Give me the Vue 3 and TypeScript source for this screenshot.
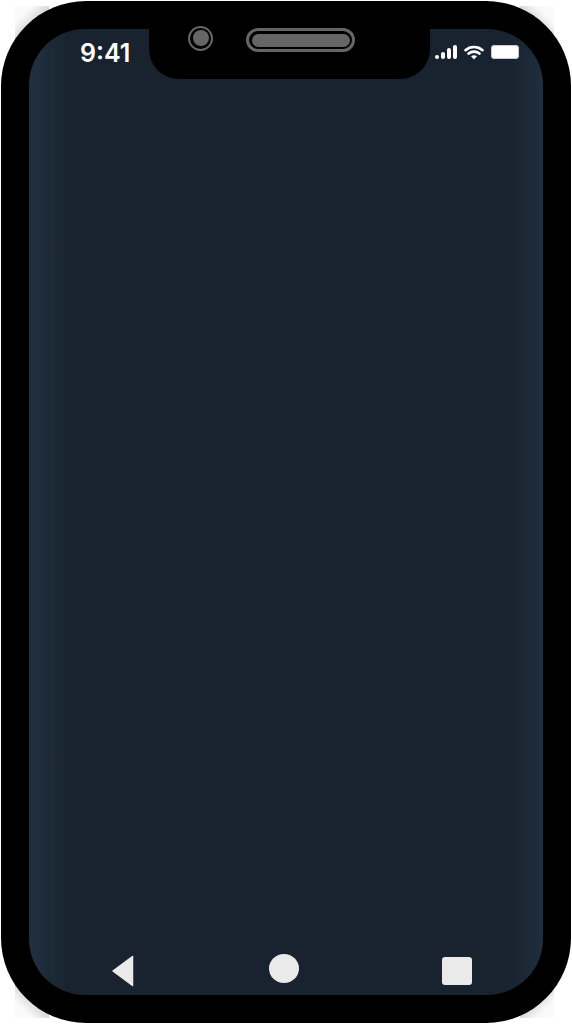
<script setup lang="ts">
const bars: number[] = [4, 7, 11, 14]
</script>

<template>
  <div class="page">
    <i class="corner tl"></i>
    <i class="corner tr"></i>
    <i class="corner bl"></i>
    <i class="corner br"></i>
    <div class="phone">
      <div class="screen">
        <div class="notch"></div>
        <div class="status">
          <span class="time">9:41</span>
          <div class="indicators">
            <div class="signal">
              <b v-for="h in bars" :key="h" class="bar" :style="{ height: h + 'px' }"></b>
            </div>
            <svg class="wifi" width="20" height="15" viewBox="0 0 20 15">
              <path d="M1.5 5.2C6.2 1 13.8 1 18.5 5.2M4.6 8.6C7.6 6 12.4 6 15.4 8.6" fill="none" stroke="#fff" stroke-width="2.6" stroke-linecap="round" />
              <path d="M7 11.3C8.8 9.9 11.2 9.9 13 11.3L10 14.6Z" fill="#fff" />
            </svg>
            <div class="battery"></div>
          </div>
        </div>
        <div class="nav">
          <svg class="back" width="22" height="32" viewBox="0 0 22 32">
            <path d="M20.5 1.5V30.5L1 16Z" fill="#eaeaea" stroke="#eaeaea" stroke-width="1.5" stroke-linejoin="round" />
          </svg>
          <div class="home"></div>
          <div class="recent"></div>
        </div>
      </div>
      <div class="earpiece">
        <div class="camera"><div class="lens"></div></div>
        <div class="speaker"><div class="grille"></div></div>
      </div>
    </div>
  </div>
</template>

<style scoped>
.page {
  position: relative;
  width: 572px;
  height: 1024px;
  background: #fff;
  overflow: hidden;
  box-sizing: border-box;
  padding: 1px;
}
.corner {
  position: absolute;
  width: 34px;
  height: 34px;
}
.tl { left: 15px; top: 6px; background: linear-gradient(135deg, #fafafa 25%, #cfcfcf 60%); }
.tr { right: 18px; top: 6px; background: linear-gradient(225deg, #fafafa 25%, #cfcfcf 60%); }
.bl { left: 15px; bottom: 6px; background: linear-gradient(45deg, #fafafa 25%, #cfcfcf 60%); }
.br { right: 18px; bottom: 6px; background: linear-gradient(315deg, #fafafa 25%, #cfcfcf 60%); }
.phone {
  position: relative;
  box-sizing: border-box;
  width: 570px;
  height: 1022px;
  padding: 28px;
  background: #000;
  border-radius: 85px;
}
.screen {
  position: relative;
  display: flex;
  flex-direction: column;
  justify-content: space-between;
  box-sizing: border-box;
  height: 966px;
  border-radius: 56px;
  overflow: hidden;
  background: linear-gradient(90deg, #1f2f3e 0, #1f2e3d 14px, #1d2b39 15px, #1c2936 26px, #1b2733 27px, #1b2632 35px, #19232f 36px, #19232f 478px, #1b2734 492px, #1d2b39 505px, #1f2f3e 514px);
}
.notch {
  position: absolute;
  left: 120px;
  top: 0;
  width: 281px;
  height: 50px;
  background: #000;
  border-radius: 0 0 30px 30px;
}
.status {
  display: flex;
  justify-content: space-between;
  align-items: center;
  padding: 10px 24px 0 51px;
}
.time {
  color: #fff;
  font: 600 25px/28px Inter, "Liberation Sans", sans-serif;
}
.indicators {
  display: flex;
  align-items: center;
  gap: 7px;
  margin-bottom: 2px;
}
.signal {
  display: flex;
  align-items: flex-end;
  gap: 2px;
}
.bar {
  display: block;
  width: 4px;
  background: #fff;
  border-radius: 2px;
}
.wifi {
  display: block;
}
.battery {
  box-sizing: border-box;
  width: 28px;
  height: 14px;
  background: #fff;
  border-radius: 4px;
  box-shadow: inset 0 0 0 1px #c9ccd0;
}
.nav {
  display: flex;
  justify-content: space-between;
  align-items: center;
  padding: 0 71px 8px 83px;
}
.back {
  display: block;
}
.home {
  width: 30px;
  height: 29px;
  border-radius: 50%;
  background: #eaeaea;
  margin: 0 8px 4px 0;
}
.recent {
  width: 30px;
  height: 28px;
  border-radius: 3px;
  background: #eaeaea;
}
.earpiece {
  position: absolute;
  top: 27px;
  left: 187px;
  display: flex;
  align-items: center;
  gap: 33px;
}
.camera {
  box-sizing: border-box;
  width: 25px;
  height: 25px;
  margin-top: -4px;
  padding: 2.5px;
  border: 2.5px solid #666;
  border-radius: 50%;
  background: #000;
}
.lens {
  width: 100%;
  height: 100%;
  border-radius: 50%;
  background: #666;
}
.speaker {
  box-sizing: border-box;
  width: 109px;
  height: 24px;
  padding: 2.5px;
  border: 3.5px solid #666;
  border-radius: 12px;
  background: #000;
}
.grille {
  height: 100%;
  border-radius: 8px;
  background: #666;
}
</style>
